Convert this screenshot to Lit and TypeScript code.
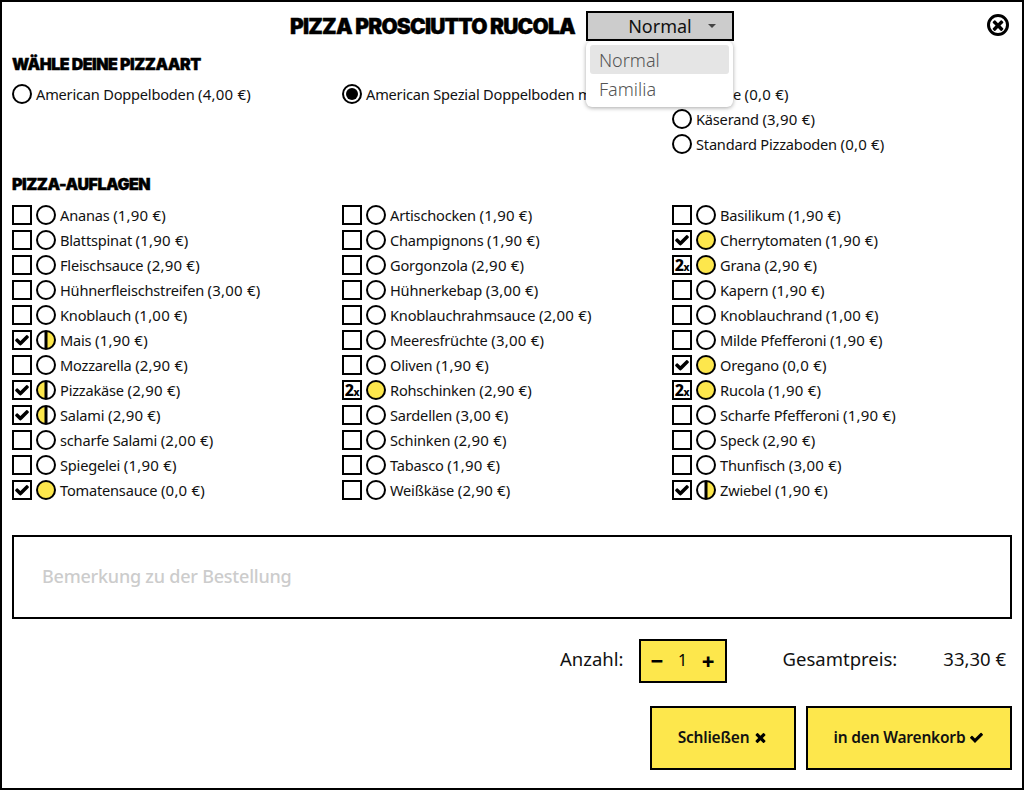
import { LitElement, html, css, svg } from "lit";
import { customElement } from "lit/decorators.js";

const CHECK = "M1671 566q0 40-28 68l-724 724-136 136q-28 28-68 28t-68-28l-136-136-362-362q-28-28-28-68t28-68l136-136q28-28 68-28t68 28l294 295 656-657q28-28 68-28t68 28l136 136q28 28 28 68z";
const TIMES = "M1490 1322q0 40-28 68l-136 136q-28 28-68 28t-68-28l-294-294-294 294q-28 28-68 28t-68-28l-136-136q-28-28-28-68t28-68l294-294-294-294q-28-28-28-68t28-68l136-136q28-28 68-28t68 28l294 294 294-294q28-28 68-28t68 28l136 136q28 28 28 68t-28 68l-294 294 294 294q28 28 28 68z";

type Top = [string, string?, string?];
// name, box state (c = checked, 2 = double), circle (f = full, l = left half, r = right half)
const toppings: Top[][] = [
  [["Ananas (1,90 €)"], ["Blattspinat (1,90 €)"], ["Fleischsauce (2,90 €)"], ["Hühnerfleischstreifen (3,00 €)"], ["Knoblauch (1,00 €)"], ["Mais (1,90 €)", "c", "r"], ["Mozzarella (2,90 €)"], ["Pizzakäse (2,90 €)", "c", "l"], ["Salami (2,90 €)", "c", "l"], ["scharfe Salami (2,00 €)"], ["Spiegelei (1,90 €)"], ["Tomatensauce (0,0 €)", "c", "f"]],
  [["Artischocken (1,90 €)"], ["Champignons (1,90 €)"], ["Gorgonzola (2,90 €)"], ["Hühnerkebap (3,00 €)"], ["Knoblauchrahmsauce (2,00 €)"], ["Meeresfrüchte (3,00 €)"], ["Oliven (1,90 €)"], ["Rohschinken (2,90 €)", "2", "f"], ["Sardellen (3,00 €)"], ["Schinken (2,90 €)"], ["Tabasco (1,90 €)"], ["Weißkäse (2,90 €)"]],
  [["Basilikum (1,90 €)"], ["Cherrytomaten (1,90 €)", "c", "f"], ["Grana (2,90 €)", "2", "f"], ["Kapern (1,90 €)"], ["Knoblauchrand (1,00 €)"], ["Milde Pfefferoni (1,90 €)"], ["Oregano (0,0 €)", "c", "f"], ["Rucola (1,90 €)", "2", "f"], ["Scharfe Pfefferoni (1,90 €)"], ["Speck (2,90 €)"], ["Thunfisch (3,00 €)"], ["Zwiebel (1,90 €)", "c", "r"]],
];

@customElement("app-root")
export class AppRoot extends LitElement {
  static styles = css`
    :host {
      display: block;
      box-sizing: border-box;
      width: 1024px;
      height: 790px;
      border: 2px solid #000;
      background: #fff;
      color: #111;
      font-family: "Noto Sans", sans-serif;
      font-size: 14.6px;
      letter-spacing: -0.2px;
      overflow: hidden;
    }
    .header {
      display: grid;
      grid-template-columns: 1fr auto 1fr;
      align-items: center;
      height: 38px;
      padding: 5px 12px 0 12px;
    }
    .title-group { grid-column: 2; display: flex; align-items: center; gap: 11px; }
    h1, h2 {
      margin: 0;
      font-family: "Inter", sans-serif;
      font-weight: 900;
      color: #000;
      text-transform: uppercase;
      -webkit-text-stroke: 0.4px #000;
    }
    h1 { font-size: 21px; letter-spacing: -0.8px; }
    h2 { font-size: 16px; letter-spacing: -0.5px; line-height: 20px; margin-left: 10px; }
    .select-wrap { position: relative; }
    .select {
      box-sizing: border-box;
      width: 148px;
      height: 30px;
      border: 2px solid #000;
      background: #ccc;
      display: flex;
      align-items: center;
      justify-content: center;
      gap: 16px;
      padding-left: 24px;
      font-size: 18px;
      letter-spacing: 0;
    }
    .caret { width: 0; height: 0; border: 4px solid transparent; border-top: 4px solid #444; border-bottom: 0; }
    .menu {
      position: absolute;
      z-index: 2;
      top: 30px;
      left: 0;
      box-sizing: border-box;
      width: 147px;
      height: 66px;
      padding: 4px;
      background: #fff;
      border-radius: 6px;
      box-shadow: 0 1px 4px rgba(0, 0, 0, 0.35);
      font-size: 18px;
      font-weight: 300;
      color: #555;
      letter-spacing: 0;
    }
    .menu div { height: 29px; line-height: 30px; padding-left: 9px; border-radius: 3px; }
    .menu .active { background: #e5e5e5; }
    .close { grid-column: 3; justify-self: end; width: 24px; height: 24px; margin-top: -2px; }
    .section-art { margin-top: 9px; }
    .grid {
      display: grid;
      grid-template-columns: repeat(3, 330px);
      padding-left: 10px;
    }
    .art { margin-top: 7.5px; height: 75px; }
    .toppings { margin-top: 8.5px; }
    .sec2 { margin-top: 17.5px; }
    .col { display: flex; flex-direction: column; }
    .row { display: flex; align-items: center; gap: 4px; height: 25px; white-space: nowrap; }
    .cost { font-size: 15px; letter-spacing: 0.2px; }
    .box {
      box-sizing: border-box;
      width: 20px;
      height: 20px;
      flex: none;
      border: 2px solid #000;
      display: flex;
      align-items: center;
      justify-content: center;
      font-weight: 800;
      color: #000;
      letter-spacing: -0.5px;
      line-height: 16px;
    }
    .box svg { width: 16px; height: 16px; display: block; }
    .two { font-size: 16px; }
    .x { font-size: 10px; align-self: flex-end; line-height: 12px; }
    .radio { width: 20px; height: 20px; flex: none; display: block; }
    .note {
      box-sizing: border-box;
      margin: 32.5px 0 0 10px;
      width: 1000px;
      height: 84px;
      border: 2px solid #000;
      display: flex;
      align-items: center;
      padding: 0 0 2px 28px;
      color: #ccc;
      font-size: 18px;
      font-weight: 500;
      letter-spacing: -0.22px;
    }
    .total {
      display: flex;
      align-items: center;
      margin: 20px 16px 0 0;
      justify-content: flex-end;
      height: 44px;
      font-size: 18.5px;
      letter-spacing: 0;
    }
    .total > span { padding-bottom: 6px; }
    .stepper {
      box-sizing: border-box;
      width: 88px;
      height: 44px;
      margin: 0 56px 0 15px;
      border: 2px solid #000;
      background: #fde74c;
      display: flex;
      align-items: center;
      justify-content: space-between;
      padding: 0 10px 3px;
      font-size: 16px;
      color: #000;
    }
    .stepper b { font-size: 22px; font-weight: 800; line-height: 1; color: #000; }
    .total .price { margin-left: 46px; }
    .actions { display: flex; justify-content: flex-end; gap: 10px; margin: 23px 10px 0 0; }
    .btn {
      box-sizing: border-box;
      height: 64px;
      border: 2px solid #000;
      background: #fde74c;
      display: flex;
      align-items: center;
      justify-content: center;
      gap: 4px;
      padding-bottom: 2px;
      font-size: 15.5px;
      font-weight: 600;
      color: #111;
      letter-spacing: -0.2px;
    }
    .btn svg { width: 15px; height: 15px; }
    .b1 { width: 146px; }
    .b2 { width: 206px; }
  `;

  private circle(fill?: string, selected = false) {
    const half = fill === "l" || fill === "r";
    return html`<svg class="radio" viewBox="0 0 20 20">
      ${svg`<circle cx="10" cy="10" r="9" fill=${fill === "f" ? "#fde74c" : "#fff"} />
      ${fill === "l" ? svg`<path d="M10 1a9 9 0 0 0 0 18z" fill="#fde74c"/>` : ""}
      ${fill === "r" ? svg`<path d="M10 1a9 9 0 0 1 0 18z" fill="#fde74c"/>` : ""}
      ${half ? svg`<path d="M10 1v18" stroke="#000" stroke-width="3"/>` : ""}
      <circle cx="10" cy="10" r="9" fill="none" stroke="#000" stroke-width="2"/>
      ${selected ? svg`<circle cx="10" cy="10" r="6" fill="#000"/>` : ""}`}
    </svg>`;
  }

  private label(text: string) {
    const i = text.lastIndexOf(" (");
    if (i < 0) return html`<span>${text}</span>`;
    return html`<span>${text.slice(0, i)} <span class="cost">${text.slice(i + 1)}</span></span>`;
  }

  private top(t: Top) {
    return html`<div class="row">
      <span class="box">${t[1] === "c"
        ? html`<svg viewBox="0 0 1792 1792"><path d=${CHECK} /></svg>`
        : t[1] === "2"
          ? html`<span class="two">2</span><span class="x">x</span>`
          : ""}</span>
      ${this.circle(t[2])}
      ${this.label(t[0])}
    </div>`;
  }

  private art(text: string, selected = false) {
    return html`<div class="row">${this.circle(undefined, selected)}${this.label(text)}</div>`;
  }

  render() {
    return html`
      <div class="header">
        <div class="title-group">
          <h1>Pizza Prosciutto Rucola</h1>
          <div class="select-wrap">
            <div class="select">Normal <span class="caret"></span></div>
            <div class="menu"><div class="active">Normal</div><div>Familia</div></div>
          </div>
        </div>
        <svg class="close" viewBox="0 0 24 24">
          <circle cx="12" cy="12" r="9.5" fill="none" stroke="#000" stroke-width="3"/>
          <path transform="translate(3.94 3.94) scale(.009)" d=${TIMES} />
        </svg>
      </div>
      <h2 class="section-art">Wähle deine Pizzaart</h2>
      <div class="grid art">
        <div class="col">${this.art("American Doppelboden (4,00 €)")}</div>
        <div class="col">${this.art("American Spezial Doppelboden mit", true)}</div>
        <div class="col">
          ${this.art("Dünne (0,0 €)")}
          ${this.art("Käserand (3,90 €)")}
          ${this.art("Standard Pizzaboden (0,0 €)")}
        </div>
      </div>
      <h2 class="sec2">Pizza-Auflagen</h2>
      <div class="grid toppings">
        ${toppings.map((c) => html`<div class="col">${c.map((t) => this.top(t))}</div>`)}
      </div>
      <div class="note">Bemerkung zu der Bestellung</div>
      <div class="total">
        <span>Anzahl:</span>
        <div class="stepper"><b>−</b><span>1</span><b>+</b></div>
        <span>Gesamtpreis:</span>
        <span class="price">33,30 €</span>
      </div>
      <div class="actions">
        <div class="btn b1">Schließen <svg viewBox="0 0 1792 1792"><path d=${TIMES} /></svg></div>
        <div class="btn b2">in den Warenkorb <svg viewBox="0 0 1792 1792"><path d=${CHECK} /></svg></div>
      </div>
    `;
  }
}
